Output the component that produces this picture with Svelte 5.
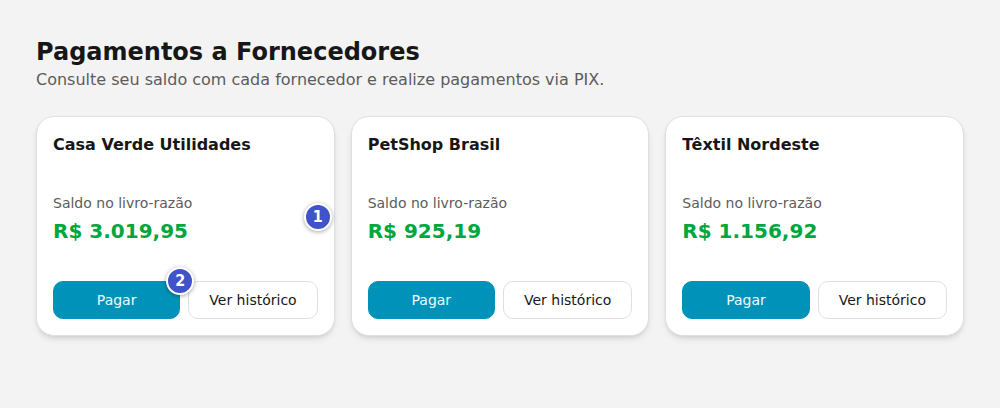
<script>
  const suppliers = [
    { name: 'Casa Verde Utilidades', balance: 'R$ 3.019,95', marked: true },
    { name: 'PetShop Brasil', balance: 'R$ 925,19' },
    { name: 'Têxtil Nordeste', balance: 'R$ 1.156,92' }
  ];
</script>

<main>
  <header>
    <h1>Pagamentos a Fornecedores</h1>
    <p>Consulte seu saldo com cada fornecedor e realize pagamentos via PIX.</p>
  </header>
  <div class="grid">
    {#each suppliers as supplier}
      <article>
        <h2>{supplier.name}</h2>
        <div class="balance">
          <p class="label">Saldo no livro-razão</p>
          <p class="amount">{supplier.balance}</p>
        </div>
        <div class="actions">
          <div class="slot">
            <button class="primary">Pagar</button>
            {#if supplier.marked}<span class="marker pay">2</span>{/if}
          </div>
          <button class="outline">Ver histórico</button>
        </div>
        {#if supplier.marked}<span class="marker card">1</span>{/if}
      </article>
    {/each}
  </div>
</main>

<style>
  :global(body) {
    background: #f3f3f3;
  }
  main {
    padding: 36px;
    font-family: "DejaVu Sans", sans-serif;
    color: #171717;
  }
  h1, h2, p {
    margin: 0;
  }
  header {
    margin-bottom: 24px;
  }
  h1 {
    font-size: 24px;
    line-height: 32px;
  }
  header p {
    font-size: 16px;
    line-height: 24px;
    color: #5c5c5c;
  }
  .grid {
    display: grid;
    grid-template-columns: repeat(3, minmax(0, 1fr));
    gap: 16px;
  }
  article {
    position: relative;
    padding: 16px;
    background: #fff;
    border: 1px solid #e0e0e0;
    border-radius: 18px;
    box-shadow: 0 4px 6px -1px rgba(0, 0, 0, 0.1), 0 2px 4px -2px rgba(0, 0, 0, 0.1);
  }
  h2 {
    font-size: 16px;
    line-height: 24px;
  }
  .balance {
    padding: 36px 0;
  }
  .label {
    font-size: 14px;
    line-height: 20px;
    color: #5c5c5c;
  }
  .amount {
    margin-top: 4px;
    font-size: 20px;
    line-height: 28px;
    font-weight: 700;
    color: #00a63e;
  }
  .actions {
    display: grid;
    grid-template-columns: 127fr 129fr;
    gap: 8px;
  }
  .slot {
    position: relative;
  }
  button {
    width: 100%;
    height: 38px;
    padding: 0 16px;
    border: 1px solid #e0e0e0;
    border-radius: 10px;
    font: 14px/20px "DejaVu Sans", sans-serif;
    white-space: nowrap;
    cursor: pointer;
  }
  .primary {
    color: #ecfeff;
    background: #0092b8;
    border-color: #0092b8;
  }
  .outline {
    color: #171717;
    background: #fff;
  }
  .marker {
    position: absolute;
    box-sizing: border-box;
    width: 28px;
    height: 28px;
    border: 2px solid #fff;
    border-radius: 50%;
    background: #4053c8;
    color: #fff;
    font-family: "DejaVu Sans Condensed", "DejaVu Sans", sans-serif;
    font-size: 16px;
    line-height: 24px;
    font-weight: 700;
    text-align: center;
    box-shadow: 0 1px 4px rgba(0, 0, 0, 0.35);
  }
  .pay {
    top: -14px;
    right: -14px;
  }
  .card {
    right: 2px;
    top: 86px;
  }
</style>
